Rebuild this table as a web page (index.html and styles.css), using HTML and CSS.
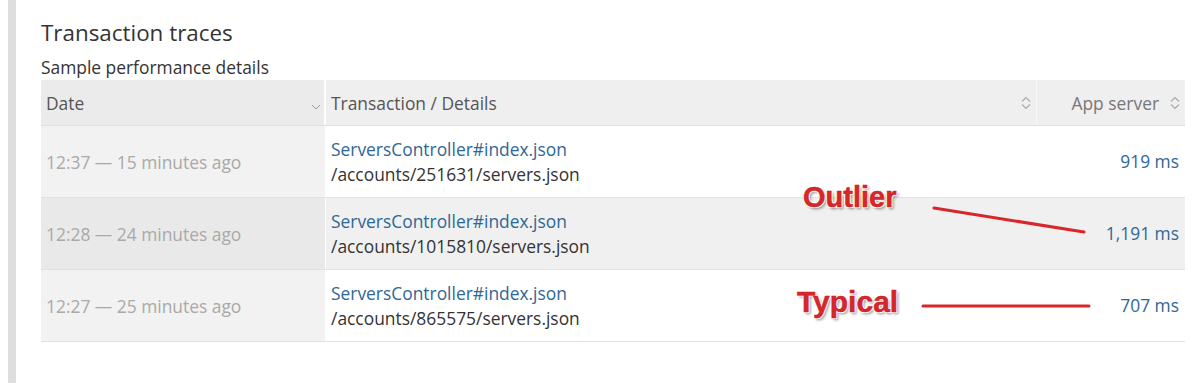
FILE: index.html
```html
<!DOCTYPE html>
<html>
<head>
<meta charset="utf-8">
<link rel="stylesheet" href="styles.css">
</head>
<body>
<div class="panel">
  <h2 class="title">Transaction traces</h2>
  <div class="subtitle">Sample performance details</div>
  <div class="table">
    <div class="row head">
      <div class="cell c-date">
        <span>Date</span>
        <svg class="chev" width="10" height="6" viewBox="0 0 10 6"><polyline points="1,1 5,5 9,1" fill="none" stroke="#999" stroke-width="1"/></svg>
      </div>
      <div class="cell c-tx">
        <span>Transaction / Details</span>
        <svg class="sort" width="10" height="14" viewBox="0 0 10 14"><polyline points="1,5.5 5,1.5 9,5.5" fill="none" stroke="#aaa" stroke-width="1.2"/><polyline points="1,8.5 5,12.5 9,8.5" fill="none" stroke="#aaa" stroke-width="1.2"/></svg>
      </div>
      <div class="cell c-app">
        <span>App server</span>
        <svg class="sort" width="10" height="14" viewBox="0 0 10 14"><polyline points="1,5.5 5,1.5 9,5.5" fill="none" stroke="#aaa" stroke-width="1.2"/><polyline points="1,8.5 5,12.5 9,8.5" fill="none" stroke="#aaa" stroke-width="1.2"/></svg>
      </div>
    </div>
    <div class="row">
      <div class="cell c-date">12:37 — 15 minutes ago</div>
      <div class="cell c-tx"><a class="link">ServersController#index.json</a><span class="path">/accounts/251631/servers.json</span></div>
      <div class="cell c-app"><a class="link">919 ms</a></div>
    </div>
    <div class="row hover">
      <div class="cell c-date">12:28 — 24 minutes ago</div>
      <div class="cell c-tx"><a class="link">ServersController#index.json</a><span class="path">/accounts/1015810/servers.json</span></div>
      <div class="cell c-app"><a class="link">1,191 ms</a></div>
    </div>
    <div class="row">
      <div class="cell c-date">12:27 — 25 minutes ago</div>
      <div class="cell c-tx"><a class="link">ServersController#index.json</a><span class="path">/accounts/865575/servers.json</span></div>
      <div class="cell c-app"><a class="link">707 ms</a></div>
    </div>
  </div>
  <div class="note note-outlier">Outlier</div>
  <div class="note note-typical">Typical</div>
  <svg class="marks" width="1200" height="391" viewBox="0 0 1200 391">
    <line x1="934" y1="208" x2="1084" y2="232" stroke="#d8262b" stroke-width="3" stroke-linecap="round"/>
    <line x1="923" y1="306" x2="1089" y2="306" stroke="#d8262b" stroke-width="3" stroke-linecap="round"/>
  </svg>
</div>
</body>
</html>
```
FILE: styles.css
```css
html, body {
  margin: 0;
  padding: 0;
  background: #fff;
}
body {
  font-family: "Open Sans", "Liberation Sans", sans-serif;
  color: #333;
}
.panel {
  margin-left: 8px;
  width: 1144px;
  height: 383px;
  border-left: 8px solid #dedede;
  padding-left: 25px;
  box-sizing: content-box;
}
.title {
  margin: 0;
  padding-top: 20px;
  font-size: 22.4px;
  line-height: 26px;
  font-weight: 400;
  color: #333;
}
.subtitle {
  margin-top: 11px;
  font-size: 17.4px;
  line-height: 20px;
  color: #333;
}
.table {
  margin-top: 3px;
  width: 1144px;
}
.row {
  display: grid;
  grid-template-columns: 285px 711px 148px;
  height: 72px;
  border-bottom: 1px solid #e2e2e2;
  box-sizing: border-box;
}
.row.head {
  height: 46px;
  border-bottom: 1px solid #e0e0e0;
}
.cell {
  display: flex;
  flex-direction: column;
  justify-content: center;
  font-size: 17.4px;
  box-sizing: border-box;
}
.c-date {
  padding-left: 5px;
  color: #a9a9a9;
  background: #f2f2f2;
  border-right: 1px solid #fff;
}
.c-tx {
  padding-left: 5px;
}
.c-app {
  align-items: flex-end;
  padding-right: 6px;
}
.head .cell {
  flex-direction: row;
  align-items: center;
  color: #555;
  background: #efefef;
}
.head .c-date {
  background: #ebebeb;
  border-right: 2px solid #fff;
  justify-content: space-between;
  padding-right: 3px;
}
.head .c-tx {
  justify-content: space-between;
  padding-right: 5px;
  border-right: 1px solid #f8f8f8;
}
.head .c-app {
  justify-content: flex-end;
  gap: 11px;
  padding-right: 5px;
  color: #777;
}
.chev {
  margin-top: 8px;
}
.link {
  color: #2f6795;
  line-height: 25px;
}
.path {
  color: #333;
  line-height: 25px;
}
.hover {
  background: #f0f0f0;
}
.hover .c-date {
  background: #e9e9e9;
}
.note {
  position: absolute;
  font-family: "Liberation Sans", Arial, sans-serif;
  font-weight: 700;
  font-size: 29px;
  line-height: 1;
  color: #d8262b;
  -webkit-text-stroke: 0.5px #c41e22;
  text-shadow: 1px 1px 0 #fff, -1px -1px 0 #fff, 1px -1px 0 #fff, -1px 1px 0 #fff, 2px 2px 3px rgba(0,0,0,0.45);
}
.note-outlier {
  left: 803px;
  top: 183px;
}
.note-typical {
  left: 797px;
  top: 287px;
  font-size: 30px;
}
.marks {
  position: absolute;
  left: 0;
  top: 0;
  pointer-events: none;
}
```
